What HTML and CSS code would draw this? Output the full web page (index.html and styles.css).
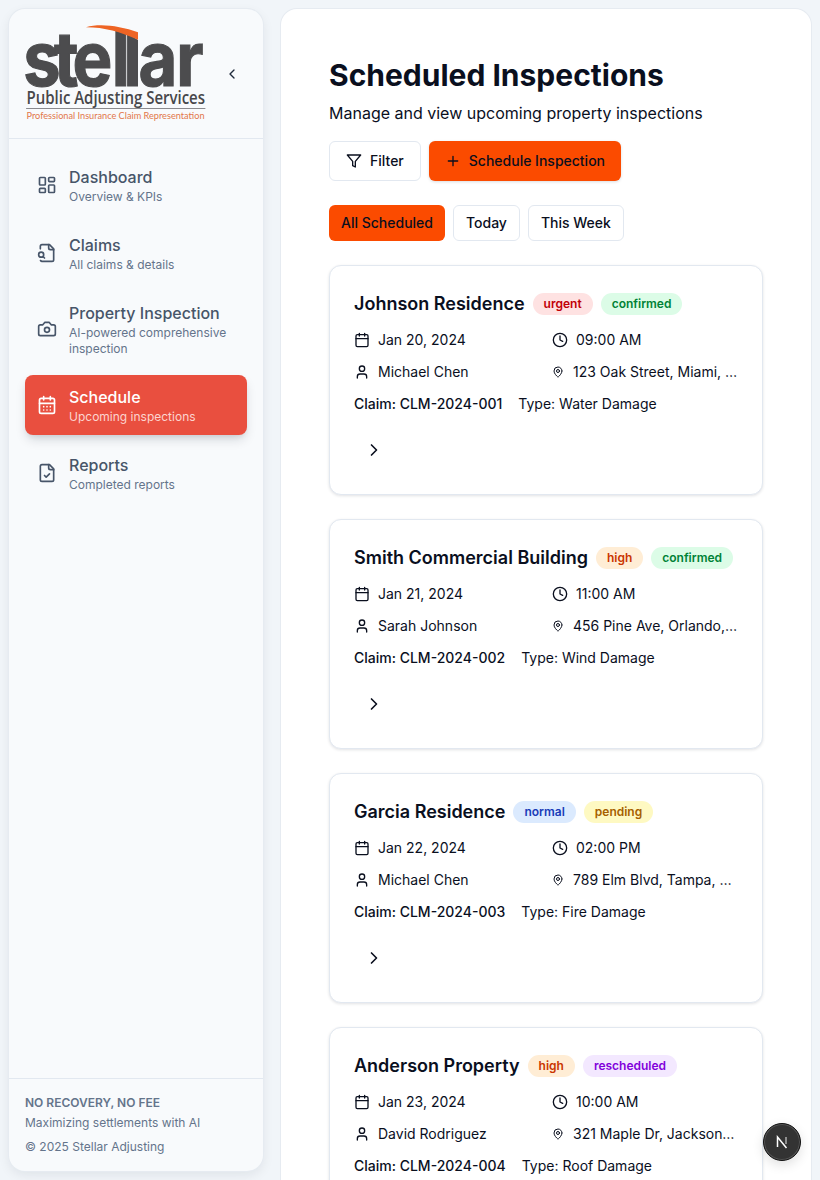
FILE: index.html
```html
<!DOCTYPE html>
<html lang="en">
<head>
<meta charset="utf-8">
<title>Scheduled Inspections</title>
<link rel="stylesheet" href="styles.css">
</head>
<body>
<svg class="sprite" aria-hidden="true">
  <symbol id="i-calendar" viewBox="0 0 24 24"><path d="M8 2v4M16 2v4M3 10h18"/><rect x="3" y="4" width="18" height="18" rx="2"/></symbol>
  <symbol id="i-clock" viewBox="0 0 24 24"><circle cx="12" cy="12" r="10"/><path d="M12 6v6l4 2"/></symbol>
  <symbol id="i-user" viewBox="0 0 24 24"><path d="M19 21v-2a4 4 0 0 0-4-4H9a4 4 0 0 0-4 4v2"/><circle cx="12" cy="7" r="4"/></symbol>
  <symbol id="i-pin" viewBox="0 0 24 24"><path d="M20 10c0 4.993-5.539 10.193-7.399 11.799a1 1 0 0 1-1.202 0C9.539 20.193 4 14.993 4 10a8 8 0 0 1 16 0"/><circle cx="12" cy="10" r="3"/></symbol>
  <symbol id="i-right" viewBox="0 0 24 24"><path d="m9 18 6-6-6-6"/></symbol>
</svg>
<div class="app">
  <aside class="sidebar">
    <header class="side-head">
      <svg class="logo" viewBox="0 0 180 98" role="img" aria-label="Stellar Public Adjusting Services">
        <text class="logo-word" transform="scale(.88 1)" x="-2 33 54 98.500 112 129 172" y="62">stellar</text>
        <path class="logo-cut" d="M88 0H118V15.500L113 16C105 10 97 7 88 5Z"/>
        <path class="logo-swoosh" d="M61 3.300C75-1 95 2 113 8.300V15.700C95 8 80 3.300 61 3.300Z"/>
        <text class="logo-name" x="1.500" y="80" textLength="178.500" lengthAdjust="spacingAndGlyphs">Public Adjusting Services</text>
        <path class="logo-rule" d="M1.500 84.500H180"/>
        <text class="logo-tag" x="1.500" y="95" textLength="178" lengthAdjust="spacingAndGlyphs">Professional Insurance Claim Representation</text>
      </svg>
      <button class="collapse" aria-label="Collapse sidebar"><svg class="ic16" viewBox="0 0 24 24"><path d="m15 18-6-6 6-6"/></svg></button>
    </header>
    <nav class="nav">
      <a class="nav-item">
        <svg class="ic20" viewBox="0 0 24 24"><rect x="3" y="3" width="7" height="9" rx="1"/><rect x="14" y="3" width="7" height="5" rx="1"/><rect x="14" y="12" width="7" height="9" rx="1"/><rect x="3" y="16" width="7" height="5" rx="1"/></svg>
        <span class="nav-text"><span class="nav-title">Dashboard</span><span class="nav-sub">Overview &amp; KPIs</span></span>
      </a>
      <a class="nav-item">
        <svg class="ic20" viewBox="0 0 24 24"><path d="M14 2v4a2 2 0 0 0 2 2h4"/><path d="M4.268 21a2 2 0 0 0 1.727 1H18a2 2 0 0 0 2-2V7l-5-5H6a2 2 0 0 0-2 2v3"/><path d="m9 18-1.500-1.500"/><circle cx="5" cy="14" r="3"/></svg>
        <span class="nav-text"><span class="nav-title">Claims</span><span class="nav-sub">All claims &amp; details</span></span>
      </a>
      <a class="nav-item">
        <svg class="ic20" viewBox="0 0 24 24"><path d="M14.500 4h-5L7 7H4a2 2 0 0 0-2 2v9a2 2 0 0 0 2 2h16a2 2 0 0 0 2-2V9a2 2 0 0 0-2-2h-3l-2.500-3z"/><circle cx="12" cy="13" r="3"/></svg>
        <span class="nav-text"><span class="nav-title">Property Inspection</span><span class="nav-sub">AI-powered comprehensive inspection</span></span>
      </a>
      <a class="nav-item active">
        <svg class="ic20" viewBox="0 0 24 24"><path d="M8 2v4M16 2v4M3 10h18M8 14h.01M12 14h.01M16 14h.01M8 18h.01M12 18h.01M16 18h.01"/><rect x="3" y="4" width="18" height="18" rx="2"/></svg>
        <span class="nav-text"><span class="nav-title">Schedule</span><span class="nav-sub">Upcoming inspections</span></span>
      </a>
      <a class="nav-item">
        <svg class="ic20" viewBox="0 0 24 24"><path d="M15 2H6a2 2 0 0 0-2 2v16a2 2 0 0 0 2 2h12a2 2 0 0 0 2-2V7Z"/><path d="M14 2v4a2 2 0 0 0 2 2h4"/><path d="m9 15 2 2 4-4"/></svg>
        <span class="nav-text"><span class="nav-title">Reports</span><span class="nav-sub">Completed reports</span></span>
      </a>
    </nav>
    <footer class="side-foot">
      <p class="foot-strong">NO RECOVERY, NO FEE</p>
      <p class="foot-line">Maximizing settlements with AI</p>
      <p class="foot-copy">© 2025 Stellar Adjusting</p>
    </footer>
  </aside>

  <main class="main">
    <h1 class="page-title">Scheduled Inspections</h1>
    <p class="page-sub">Manage and view upcoming property inspections</p>
    <div class="actions">
      <button class="btn btn-outline"><svg class="ic16" viewBox="0 0 24 24"><path d="M22 3H2l8 9.460V19l4 2v-8.540L22 3z"/></svg>Filter</button>
      <button class="btn btn-primary"><svg class="ic16" viewBox="0 0 24 24"><path d="M5 12h14M12 5v14"/></svg>Schedule Inspection</button>
    </div>
    <div class="tabs">
      <button class="tab tab-on">All Scheduled</button>
      <button class="tab">Today</button>
      <button class="tab">This Week</button>
    </div>
    <div class="cards">
      <article class="card">
        <div class="card-head"><h2 class="card-title">Johnson Residence</h2><span class="badge b-red">urgent</span><span class="badge b-green">confirmed</span></div>
        <div class="meta">
          <div class="meta-item"><svg class="ic16"><use href="#i-calendar"/></svg><span>Jan 20, 2024</span></div>
          <div class="meta-item"><svg class="ic16"><use href="#i-clock"/></svg><span>09:00 AM</span></div>
          <div class="meta-item"><svg class="ic16"><use href="#i-user"/></svg><span>Michael Chen</span></div>
          <div class="meta-item"><svg class="ic12"><use href="#i-pin"/></svg><span class="trunc">123 Oak Street, Miami, FL 33101</span></div>
        </div>
        <div class="refs"><span class="claim">Claim: CLM-2024-001</span><span>Type: Water Damage</span></div>
        <button class="more" aria-label="Open"><svg class="ic20"><use href="#i-right"/></svg></button>
      </article>
      <article class="card">
        <div class="card-head"><h2 class="card-title">Smith Commercial Building</h2><span class="badge b-orange">high</span><span class="badge b-green">confirmed</span></div>
        <div class="meta">
          <div class="meta-item"><svg class="ic16"><use href="#i-calendar"/></svg><span>Jan 21, 2024</span></div>
          <div class="meta-item"><svg class="ic16"><use href="#i-clock"/></svg><span>11:00 AM</span></div>
          <div class="meta-item"><svg class="ic16"><use href="#i-user"/></svg><span>Sarah Johnson</span></div>
          <div class="meta-item"><svg class="ic12"><use href="#i-pin"/></svg><span class="trunc">456 Pine Ave, Orlando, FL 32801</span></div>
        </div>
        <div class="refs"><span class="claim">Claim: CLM-2024-002</span><span>Type: Wind Damage</span></div>
        <button class="more" aria-label="Open"><svg class="ic20"><use href="#i-right"/></svg></button>
      </article>
      <article class="card">
        <div class="card-head"><h2 class="card-title">Garcia Residence</h2><span class="badge b-blue">normal</span><span class="badge b-yellow">pending</span></div>
        <div class="meta">
          <div class="meta-item"><svg class="ic16"><use href="#i-calendar"/></svg><span>Jan 22, 2024</span></div>
          <div class="meta-item"><svg class="ic16"><use href="#i-clock"/></svg><span>02:00 PM</span></div>
          <div class="meta-item"><svg class="ic16"><use href="#i-user"/></svg><span>Michael Chen</span></div>
          <div class="meta-item"><svg class="ic12"><use href="#i-pin"/></svg><span class="trunc">789 Elm Blvd, Tampa, FL 33602</span></div>
        </div>
        <div class="refs"><span class="claim">Claim: CLM-2024-003</span><span>Type: Fire Damage</span></div>
        <button class="more" aria-label="Open"><svg class="ic20"><use href="#i-right"/></svg></button>
      </article>
      <article class="card">
        <div class="card-head"><h2 class="card-title">Anderson Property</h2><span class="badge b-orange">high</span><span class="badge b-purple">rescheduled</span></div>
        <div class="meta">
          <div class="meta-item"><svg class="ic16"><use href="#i-calendar"/></svg><span>Jan 23, 2024</span></div>
          <div class="meta-item"><svg class="ic16"><use href="#i-clock"/></svg><span>10:00 AM</span></div>
          <div class="meta-item"><svg class="ic16"><use href="#i-user"/></svg><span>David Rodriguez</span></div>
          <div class="meta-item"><svg class="ic12"><use href="#i-pin"/></svg><span class="trunc">321 Maple Dr, Jacksonville, FL 32202</span></div>
        </div>
        <div class="refs"><span class="claim">Claim: CLM-2024-004</span><span>Type: Roof Damage</span></div>
        <button class="more" aria-label="Open"><svg class="ic20"><use href="#i-right"/></svg></button>
      </article>
    </div>
  </main>
</div>
<button class="dev-badge" aria-label="Next.js dev tools">
  <svg class="dev-mark" viewBox="0 0 14 14"><path d="M2.500 12V2L11.500 13"/><path class="dev-fade" d="M11 2v7"/></svg>
</button>
</body>
</html>
```
FILE: styles.css
```css
* { box-sizing: border-box; }
html, body { margin: 0; height: 100%; overflow: hidden; }
body {
  background: #f1f5f9;
  color: #0a0f1e;
  font-family: Inter, "Liberation Sans", sans-serif;
}
p, h1, h2 { margin: 0; }
button { font: inherit; color: inherit; background: none; border: 0; padding: 0; }
svg { fill: none; stroke: currentColor; stroke-width: 2; stroke-linecap: round; stroke-linejoin: round; flex: none; display: block; }
.sprite { width: 0; height: 0; position: absolute; }
.ic12 { width: 12px; height: 12px; margin-right: 1px; }
.ic16 { width: 16px; height: 16px; }
.ic20 { width: 20px; height: 20px; }

.app { display: flex; gap: 18px; height: 100vh; padding: 9px; }

.sidebar {
  width: 254px; flex: none;
  display: flex; flex-direction: column;
  background: #f8fafc;
  border-radius: 16px;
  box-shadow: 0 0 0 1px #e6ebf1, 0 4px 12px rgba(15, 23, 42, .08);
}
.side-head {
  display: flex; align-items: center; justify-content: space-between;
  height: 130px; flex: none;
  padding: 0 16px;
  border-bottom: 1px solid #e2e8f0;
}
.logo { width: 180px; height: 98px; stroke: none; margin-top: -1px; overflow: visible; }
.logo text { stroke: none; }
.logo text.logo-word { font: 700 76px Inter, sans-serif; fill: #4c4c4e; stroke: #4c4c4e; stroke-width: 1.200px; stroke-linejoin: miter; }
.logo-cut { fill: #f8fafc; }
.logo-swoosh { fill: #ee6424; }
.logo-name { font: 600 18px "Open Sans", sans-serif; fill: #47474a; }
.logo-rule { stroke: #8a8a8e; stroke-width: 1px; fill: none; }
.logo-tag { font: 400 9px Lato, sans-serif; fill: #e2764a; }
.collapse { width: 32px; height: 32px; display: flex; align-items: center; justify-content: center; color: #1e293b; margin-right: -1px; }

.nav { flex: 1; display: flex; flex-direction: column; gap: 8px; padding: 16px; }
.nav-item {
  display: flex; align-items: center; gap: 12px;
  padding: 10px 12px;
  border-radius: 8px;
  color: #475569;
}
.nav-text { display: flex; flex-direction: column; min-width: 0; }
.nav-title { font-size: 16px; line-height: 24px; font-weight: 500; }
.nav-sub { font-size: 12px; line-height: 16px; color: #64748b; }
.nav-item.active {
  background: #e94f3f; color: #fff;
  box-shadow: 0 6px 12px -2px rgba(15, 23, 42, .16), 0 3px 6px -3px rgba(15, 23, 42, .12);
}
.active .nav-sub { color: #fcd4cf; }

.side-foot { flex: none; padding: 16px; border-top: 1px solid #e2e8f0; color: #64748b; font-size: 12px; line-height: 16px; }
.foot-strong { font-weight: 600; }
.foot-line { margin-top: 4px; }
.foot-copy { margin-top: 8px; }

.main {
  flex: 1; min-width: 0;
  background: #fff;
  border-radius: 16px 16px 0 0;
  margin-bottom: -20px;
  padding: 48px;
  overflow: hidden;
  box-shadow: 0 0 0 1px #e6ebf1;
}
.page-title { font-size: 30px; line-height: 36px; font-weight: 700; }
.page-sub { margin-top: 8px; font-size: 16px; line-height: 24px; }

.actions { display: flex; gap: 8px; margin-top: 16px; }
.btn {
  height: 40px; padding: 0 16px;
  display: inline-flex; align-items: center; gap: 8px;
  font-size: 14px; line-height: 20px; font-weight: 500;
  border-radius: 6px;
}
.btn-outline { background: #fff; border: 1px solid #e2e8f0; }
.btn-primary { background: #fb4b00; box-shadow: 0 1px 3px rgba(15, 23, 42, .15); }

.tabs { display: flex; gap: 8px; margin-top: 24px; }
.tab {
  height: 36px; padding: 0 12px;
  font-size: 14px; line-height: 20px; font-weight: 500;
  background: #fff; border: 1px solid #e2e8f0; border-radius: 6px;
}
.tab-on { background: #fb4b00; border: 0; }

.cards { display: flex; flex-direction: column; gap: 24px; margin-top: 24px; }
.card {
  background: #fff;
  border: 1px solid #e2e8f0;
  border-radius: 12px;
  padding: 24px;
  box-shadow: 0 1px 3px rgba(15, 23, 42, .12);
}
.card-head { display: flex; align-items: center; gap: 8px; height: 28px; }
.card-title { font-size: 18px; line-height: 28px; font-weight: 600; }
.badge { height: 22px; padding: 0 11px; border-radius: 11px; font-size: 12px; line-height: 22px; font-weight: 600; }
.b-red { background: #fee2e2; color: #c10007; }
.b-green { background: #dcfce7; color: #008236; }
.b-orange { background: #ffedd5; color: #ca3500; }
.b-blue { background: #dbeafe; color: #193cb8; }
.b-yellow { background: #fef9c2; color: #a65f00; }
.b-purple { background: #f3e8ff; color: #8200db; }

.meta { display: grid; grid-template-columns: 1fr 1fr; gap: 12px; margin-top: 12px; }
.meta-item { display: flex; align-items: center; gap: 8px; min-width: 0; font-size: 14px; line-height: 20px; }
.trunc { white-space: nowrap; overflow: hidden; text-overflow: ellipsis; min-width: 0; }
.refs { display: flex; gap: 16px; margin-top: 12px; font-size: 14px; line-height: 20px; }
.claim { font-weight: 500; }
.more { display: flex; align-items: center; justify-content: center; width: 40px; height: 40px; margin-top: 16px; }

.dev-badge {
  position: fixed; left: 763px; top: 1123px;
  width: 38px; height: 38px; border-radius: 50%;
  display: flex; align-items: center; justify-content: center;
  background: #333; color: #fff;
  border: 1px solid #111;
  box-shadow: inset 0 0 0 1px #555, 0 4px 12px rgba(0, 0, 0, .12);
}
.dev-mark { width: 14px; height: 14px; stroke-width: 1.500; stroke-linecap: butt; stroke-linejoin: miter; }
.dev-fade { opacity: .6; }
```
